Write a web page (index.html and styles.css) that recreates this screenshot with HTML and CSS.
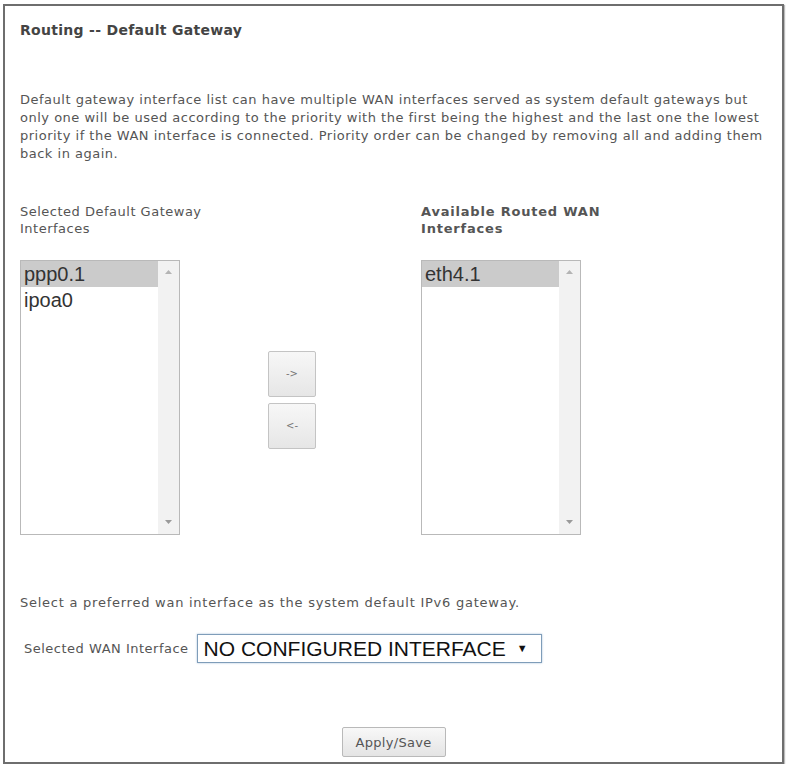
FILE: index.html
```html
<!DOCTYPE html>
<html lang="en">
<head>
  <meta charset="UTF-8" />
  <title>Routing -- Default Gateway</title>
  <meta name="viewport" content="width=device-width, initial-scale=1.0"/>
  <link rel="stylesheet" href="styles.css">
</head>
<body>
<div class="frame">
  <h3 class="title">Routing -- Default Gateway</h3>

  <p class="intro">Default gateway interface list can have multiple WAN interfaces served as system default gateways but<br>
    only one will be used according to the priority with the first being the highest and the last one the lowest<br>
    priority if the WAN interface is connected. Priority order can be changed by removing all and adding them<br>
    back in again.</p>

  <div class="gateways">
    <div class="col-label">Selected Default Gateway<br>Interfaces</div>
    <div></div>
    <div class="col-label bold">Available Routed WAN<br>Interfaces</div>

    <div class="listbox">
      <ul class="options">
        <li class="selected">ppp0.1</li>
        <li>ipoa0</li>
      </ul>
      <div class="scroll">
        <svg width="7" height="4" viewBox="0 0 7 4"><path d="M0 4 L3.5 0 L7 4 Z" fill="#b4b4b4"/></svg>
        <svg width="7" height="4" viewBox="0 0 7 4"><path d="M0 0 L3.5 4 L7 0 Z" fill="#9a9a9a"/></svg>
      </div>
    </div>

    <div class="movers">
      <button type="button" class="move">-&gt;</button>
      <button type="button" class="move">&lt;-</button>
    </div>

    <div class="listbox">
      <ul class="options">
        <li class="selected">eth4.1</li>
      </ul>
      <div class="scroll">
        <svg width="7" height="4" viewBox="0 0 7 4"><path d="M0 4 L3.5 0 L7 4 Z" fill="#b4b4b4"/></svg>
        <svg width="7" height="4" viewBox="0 0 7 4"><path d="M0 0 L3.5 4 L7 0 Z" fill="#9a9a9a"/></svg>
      </div>
    </div>
  </div>

  <p class="v6-note">Select a preferred wan interface as the system default IPv6 gateway.</p>

  <div class="wan-row">
    <label>Selected WAN Interface</label>
    <div class="dropdown">NO CONFIGURED INTERFACE <span class="caret">&#9660;</span></div>
  </div>

  <div class="actions">
    <button type="button" class="apply">Apply/Save</button>
  </div>
</div>
</body>
</html>
```

FILE: styles.css
```css
body {
  margin: 0;
  background: white;
  font-family: 'DejaVu Sans', sans-serif;
  font-size: 13px;
  letter-spacing: 0.5px;
  color: #555;
}

.frame {
  margin: 4px 0 0 3px;
  width: 781px;
  height: 760px;
  border: 2px solid #6e6e6e;
  box-shadow: 1px 1px 1px #bbb;
  padding: 0 0 0 15px;
  box-sizing: border-box;
}

.title {
  margin: 0;
  padding-top: 15px;
  font-size: 14px;
  letter-spacing: 0.3px;
  line-height: 18px;
  color: #444;
}

.intro {
  margin: 52px 0 0 0;
  line-height: 18px;
  white-space: nowrap;
}

.gateways {
  display: grid;
  grid-template-columns: 248px 153px 200px;
  margin-top: 40px;
}

.col-label {
  line-height: 17px;
  margin-bottom: 23px;
}

.col-label.bold {
  font-weight: bold;
  letter-spacing: 0.8px;
}

.listbox {
  width: 160px;
  height: 275px;
  box-sizing: border-box;
  border: 1px solid #b9b9b9;
  display: flex;
}

.options {
  list-style: none;
  margin: 0;
  padding: 0;
  flex: 1;
  font-family: 'Liberation Sans', Arial, sans-serif;
  font-size: 20px;
  letter-spacing: 0;
  color: #333;
}

.options li {
  height: 26px;
  line-height: 26px;
  padding-left: 3px;
}

.options li.selected {
  background: #cbcbcb;
}

.scroll {
  width: 21px;
  background: #f2f2f2;
  display: flex;
  flex-direction: column;
  justify-content: space-between;
  align-items: center;
  padding: 9px 0 10px;
}

.movers {
  align-self: center;
  display: flex;
  flex-direction: column;
  gap: 6px;
  padding-top: 4px;
}

.move {
  width: 48px;
  height: 46px;
  border: 1px solid #c4c4c4;
  border-radius: 2px;
  background: linear-gradient(#f7f7f7, #e6e6e6);
  color: #777;
  font-family: 'DejaVu Sans', sans-serif;
  font-size: 10px;
  padding: 0;
}

.v6-note {
  margin: 59px 0 0 0;
  line-height: 18px;
  letter-spacing: 0.75px;
}

.wan-row {
  display: flex;
  align-items: center;
  margin-top: 22px;
  padding-left: 4px;
}

.wan-row label {
  margin-right: 8px;
}

.dropdown {
  width: 345px;
  height: 29px;
  box-sizing: border-box;
  border: 1px solid #7f9db9;
  box-shadow: 0 0 2px #a8c0d8;
  font-family: 'Liberation Sans', Arial, sans-serif;
  font-size: 21px;
  letter-spacing: 0;
  color: #111;
  line-height: 27px;
  padding-left: 6px;
}

.caret {
  font-size: 11px;
  vertical-align: 4px;
  margin-left: 5px;
}

.actions {
  text-align: center;
  margin-top: 64px;
  padding-right: 15px;
}

.apply {
  width: 104px;
  height: 30px;
  border: 1px solid #b9b9b9;
  border-radius: 2px;
  background: linear-gradient(#f8f8f8, #e4e4e4);
  color: #555;
  font-family: 'DejaVu Sans', sans-serif;
  font-size: 13px;
  letter-spacing: 0.3px;
}
```
